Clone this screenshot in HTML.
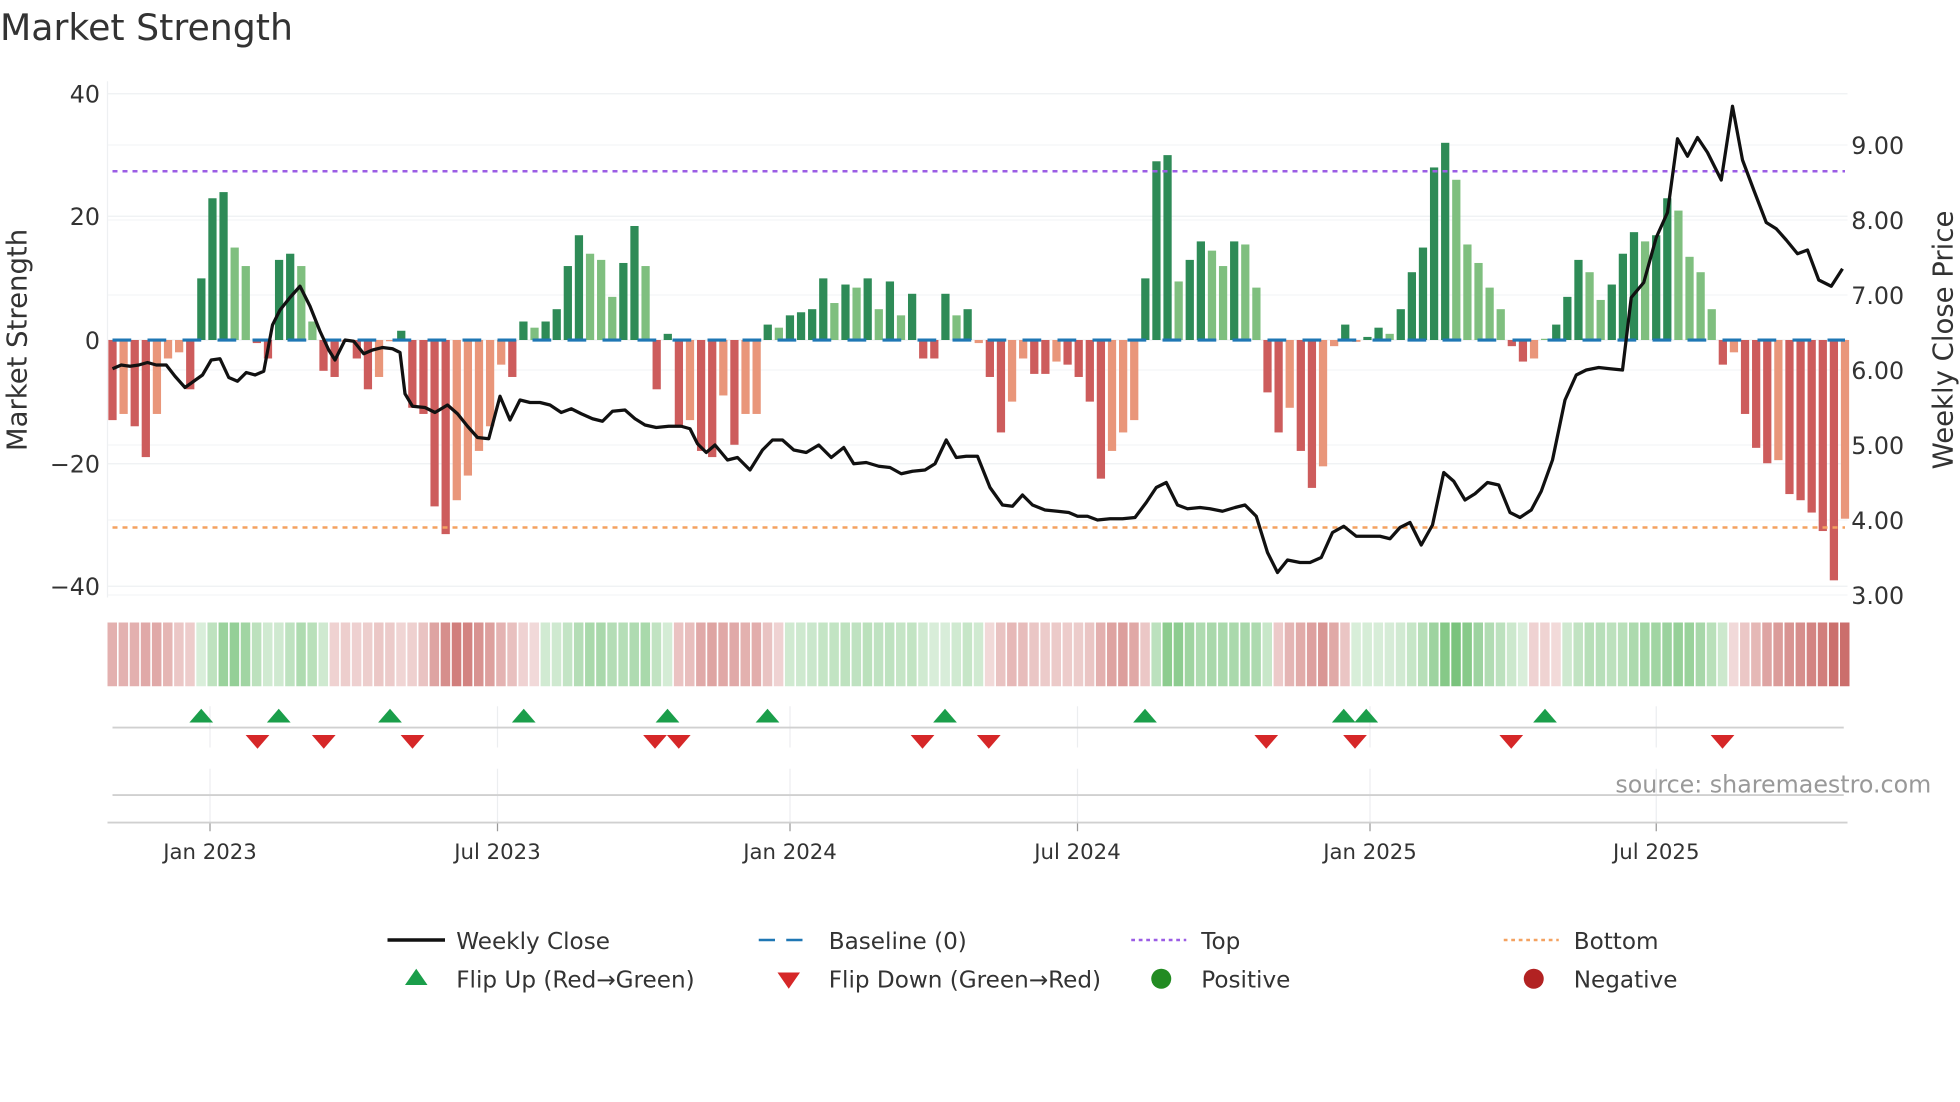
<!DOCTYPE html>
<html><head><meta charset="utf-8"><style>
html,body{margin:0;padding:0;background:#fff;width:1960px;height:1102px;overflow:hidden}
svg{display:block}
text{font-family:"DejaVu Sans","Liberation Sans",sans-serif;fill:#333}
</style></head><body>
<svg id="s" width="1960" height="1102" viewBox="0 0 1568 881.6" xmlns="http://www.w3.org/2000/svg">
<text x="0" y="32" font-size="29">Market Strength</text>
<g id="grid"></g>
<text x="80" y="82" font-size="19" text-anchor="end">40</text>
<text x="80" y="180" font-size="19" text-anchor="end">20</text>
<text x="80" y="279" font-size="19" text-anchor="end">0</text>
<text x="80" y="378" font-size="19" text-anchor="end">−20</text>
<text x="80" y="476" font-size="19" text-anchor="end">−40</text>
<text x="1481" y="123" font-size="19">9.00</text>
<text x="1481" y="183" font-size="19">8.00</text>
<text x="1481" y="243" font-size="19">7.00</text>
<text x="1481" y="303" font-size="19">6.00</text>
<text x="1481" y="363" font-size="19">5.00</text>
<text x="1481" y="423" font-size="19">4.00</text>
<text x="1481" y="483" font-size="19">3.00</text>
<text transform="translate(21,272) rotate(-90)" font-size="22" text-anchor="middle">Market Strength</text>
<text transform="translate(1562,272) rotate(-90)" font-size="22" text-anchor="middle">Weekly Close Price</text>
<g id="bars"></g>
<g id="heat"></g>
<g id="marks"></g>
<text x="168" y="687" font-size="17" text-anchor="middle">Jan 2023</text>
<text x="398" y="687" font-size="17" text-anchor="middle">Jul 2023</text>
<text x="632" y="687" font-size="17" text-anchor="middle">Jan 2024</text>
<text x="862" y="687" font-size="17" text-anchor="middle">Jul 2024</text>
<text x="1096" y="687" font-size="17" text-anchor="middle">Jan 2025</text>
<text x="1325" y="687" font-size="17" text-anchor="middle">Jul 2025</text>
<text x="1545" y="634" font-size="19" text-anchor="end" style="fill:#999">source: sharemaestro.com</text>
<line x1="310" y1="752" x2="356" y2="752" stroke="#111" stroke-width="2.8"/>
<text x="365" y="759" font-size="18.5">Weekly Close</text>
<line x1="607" y1="752" x2="651" y2="752" stroke="#1f77b4" stroke-width="2" stroke-dasharray="13,9"/>
<text x="663" y="759" font-size="18.5">Baseline (0)</text>
<line x1="905" y1="752" x2="949" y2="752" stroke="#9b5de5" stroke-width="2" stroke-dasharray="3,3"/>
<text x="961" y="759" font-size="18.5">Top</text>
<line x1="1203" y1="752" x2="1247" y2="752" stroke="#f4a261" stroke-width="2" stroke-dasharray="3,3"/>
<text x="1259" y="759" font-size="18.5">Bottom</text>
<polygon points="333,775 324,788 342,788" fill="#1a9e4a"/>
<text x="365" y="790" font-size="18.5">Flip Up (Red→Green)</text>
<polygon points="622,778 640,778 631,791" fill="#d62728"/>
<text x="663" y="790" font-size="18.5">Flip Down (Green→Red)</text>
<circle cx="929" cy="783" r="8" fill="#228b22"/>
<text x="961" y="790" font-size="18.5">Positive</text>
<circle cx="1227" cy="783" r="8" fill="#b22222"/>
<text x="1259" y="790" font-size="18.5">Negative</text>
</svg>
<script>
var NS="http://www.w3.org/2000/svg";
function el(p,t,a){var e=document.createElementNS(NS,t);for(var k in a)e.setAttribute(k,a[k]);document.getElementById(p).appendChild(e);return e;}
[75,173,272,371,469].forEach(function(y){el('grid','line',{x1:86,x2:1478,y1:y,y2:y,stroke:'#eef0f2','stroke-width':1});});
[116,176,236,296,356,416,476].forEach(function(y){el('grid','line',{x1:86,x2:1478,y1:y,y2:y,stroke:'#f4f5f7','stroke-width':1});});
el('grid','line',{x1:86,x2:86,y1:65,y2:478,stroke:'#eef0f2'});
[168,398,632,862,1096,1325].forEach(function(x){
 el('grid','line',{x1:x,x2:x,y1:565,y2:598,stroke:'#eceef0'});
 el('grid','line',{x1:x,x2:x,y1:615,y2:658,stroke:'#eceef0'});
 el('grid','line',{x1:x,x2:x,y1:658,y2:665,stroke:'#999'});
});
el('grid','line',{x1:90,x2:1475,y1:582,y2:582,stroke:'#d0d0d0','stroke-width':1.5});
el('grid','line',{x1:90,x2:1475,y1:636,y2:636,stroke:'#d0d0d0','stroke-width':1.5});
el('grid','line',{x1:86,x2:1478,y1:658,y2:658,stroke:'#d0d0d0','stroke-width':1.5});
var B=[[-13,1],[-12,0],[-14,1],[-19,1],[-12,0],[-3,0],[-2,0],[-8,1],[10,1],[23,1],[24,1],[15,0],[12,0],[-0.5,1],[-3,1],[13,1],[14,1],[12,0],[3,0],[-5,1],[-6,1],[-0.3,0],[-3,1],[-8,1],[-6,0],[-0.2,0],[1.5,1],[-11,1],[-12,1],[-27,1],[-31.5,1],[-26,0],[-22,0],[-18,0],[-14,0],[-4,0],[-6,1],[3,1],[2,0],[3,1],[5,1],[12,1],[17,1],[14,0],[13,0],[7,0],[12.5,1],[18.5,1],[12,0],[-8,1],[1,1],[-14,1],[-13,0],[-18,1],[-19,1],[-9,0],[-17,1],[-12,0],[-12,0],[2.5,1],[2,0],[4,1],[4.5,1],[5,1],[10,1],[6,0],[9,1],[8.5,0],[10,1],[5,0],[9.5,1],[4,0],[7.5,1],[-3,1],[-3,1],[7.5,1],[4,0],[5,1],[-0.5,0],[-6,1],[-15,1],[-10,0],[-3,0],[-5.5,1],[-5.5,1],[-3.5,0],[-4,1],[-6,1],[-10,1],[-22.5,1],[-18,0],[-15,0],[-13,0],[10,1],[29,1],[30,1],[9.5,0],[13,1],[16,1],[14.5,0],[12,0],[16,1],[15.5,0],[8.5,0],[-8.5,1],[-15,1],[-11,0],[-18,1],[-24,1],[-20.5,0],[-1,0],[2.5,1],[-0.3,0],[0.5,1],[2,1],[1,0],[5,1],[11,1],[15,1],[28,1],[32,1],[26,0],[15.5,0],[12.5,0],[8.5,0],[5,0],[-1,1],[-3.5,1],[-3,0],[0.2,0],[2.5,1],[7,1],[13,1],[11,0],[6.5,0],[9,1],[14,1],[17.5,1],[16,0],[17,1],[23,1],[21,0],[13.5,0],[11,0],[5,0],[-4,1],[-2,0],[-12,1],[-17.5,1],[-20,1],[-19.5,0],[-25,1],[-26,1],[-28,1],[-31,1],[-39,1],[-29,0]];
var n=B.length, step=(1476-90)/(n-1), z=272, u=4.93;
B.forEach(function(b,i){
 var x=90+i*step, v=b[0], h=Math.abs(v)*u;
 var c=v>=0?(b[1]?'#2e8b57':'#7fbf7f'):(b[1]?'#cd5c5c':'#e9967a');
 el('bars','rect',{x:x-3.3,y:v>=0?z-h:z,width:6.6,height:Math.max(h,0.8),fill:c});
 var s=0;for(var k=Math.max(0,i-2);k<=i;k++)s+=B[k][0];s/=Math.min(3,i+1);
 var a=Math.min(1,0.2+Math.abs(s)/30*0.7);
 el('heat','rect',{x:x-4,y:498,width:7.6,height:51,fill:s>=0?'#4caf50':'#c0504d','fill-opacity':a*0.8+0.05});
});
el('bars','line',{x1:90,x2:1476,y1:z,y2:z,stroke:'#1f77b4','stroke-width':2.5,'stroke-dasharray':'15,13'});
el('bars','line',{x1:90,x2:1476,y1:137,y2:137,stroke:'#9b5de5','stroke-width':2,'stroke-dasharray':'4,4'});
el('bars','line',{x1:90,x2:1476,y1:422,y2:422,stroke:'#f4a261','stroke-width':2,'stroke-dasharray':'4,4'});
var P=[90,295,97,292,104,293,111,292,118,290,125,292,133,292,140,301,148,310,155,305,162,300,169,288,176,287,183,302,190,305,197,298,204,300,211,297,218,260,224,248,232,238,240,229,248,245,256,265,263,280,268,288,276,272,283,273,291,283,298,280,306,278,314,279,320,282,324,315,330,325,340,326,348,330,358,324,366,331,374,341,382,350,391,351,400,317,408,336,416,320,424,322,432,322,440,324,449,330,457,327,465,331,474,335,482,337,490,329,500,328,508,335,516,340,525,342,535,341,545,341,552,343,558,355,565,362,572,356,582,368,590,366,600,376,610,360,618,352,626,352,635,360,645,362,655,356,665,366,675,358,683,371,693,370,703,373,712,374,721,379,730,377,740,376,748,371,757,352,765,366,773,365,782,365,792,390,802,404,810,405,818,396,826,404,836,408,846,409,855,410,862,413,870,413,878,416,888,415,898,415,908,414,917,402,925,390,933,386,942,404,950,407,960,406,968,407,978,409,988,406,996,404,1005,413,1014,442,1022,458,1030,448,1040,450,1048,450,1057,446,1066,426,1075,421,1085,429,1095,429,1104,429,1112,431,1120,422,1128,418,1137,436,1146,420,1155,378,1163,385,1172,400,1180,395,1190,386,1199,388,1208,410,1216,414,1225,408,1233,393,1242,368,1252,320,1261,300,1269,296,1279,294,1288,295,1298,296,1305,238,1315,226,1325,190,1334,170,1342,111,1350,125,1358,110,1366,122,1377,144,1386,85,1394,128,1403,152,1413,178,1421,183,1429,192,1438,203,1446,200,1455,224,1465,229,1474,215];
var d='';for(var i=0;i<P.length;i+=2)d+=(i?'L':'M')+P[i]+','+P[i+1];
el('bars','path',{d:d,fill:'none',stroke:'#111','stroke-width':2.6,'stroke-linejoin':'round'});
[161,223,312,419,534,614,756,916,1075,1093,1236].forEach(function(x){el('marks','polygon',{points:(x)+',567 '+(x-9.5)+',578 '+(x+9.5)+',578',fill:'#1a9e4a'});});
[206,259,330,524,543,738,791,1013,1084,1209,1378].forEach(function(x){el('marks','polygon',{points:(x-9.5)+',588 '+(x+9.5)+',588 '+x+',599',fill:'#d62728'});});
</script>
</body></html>
